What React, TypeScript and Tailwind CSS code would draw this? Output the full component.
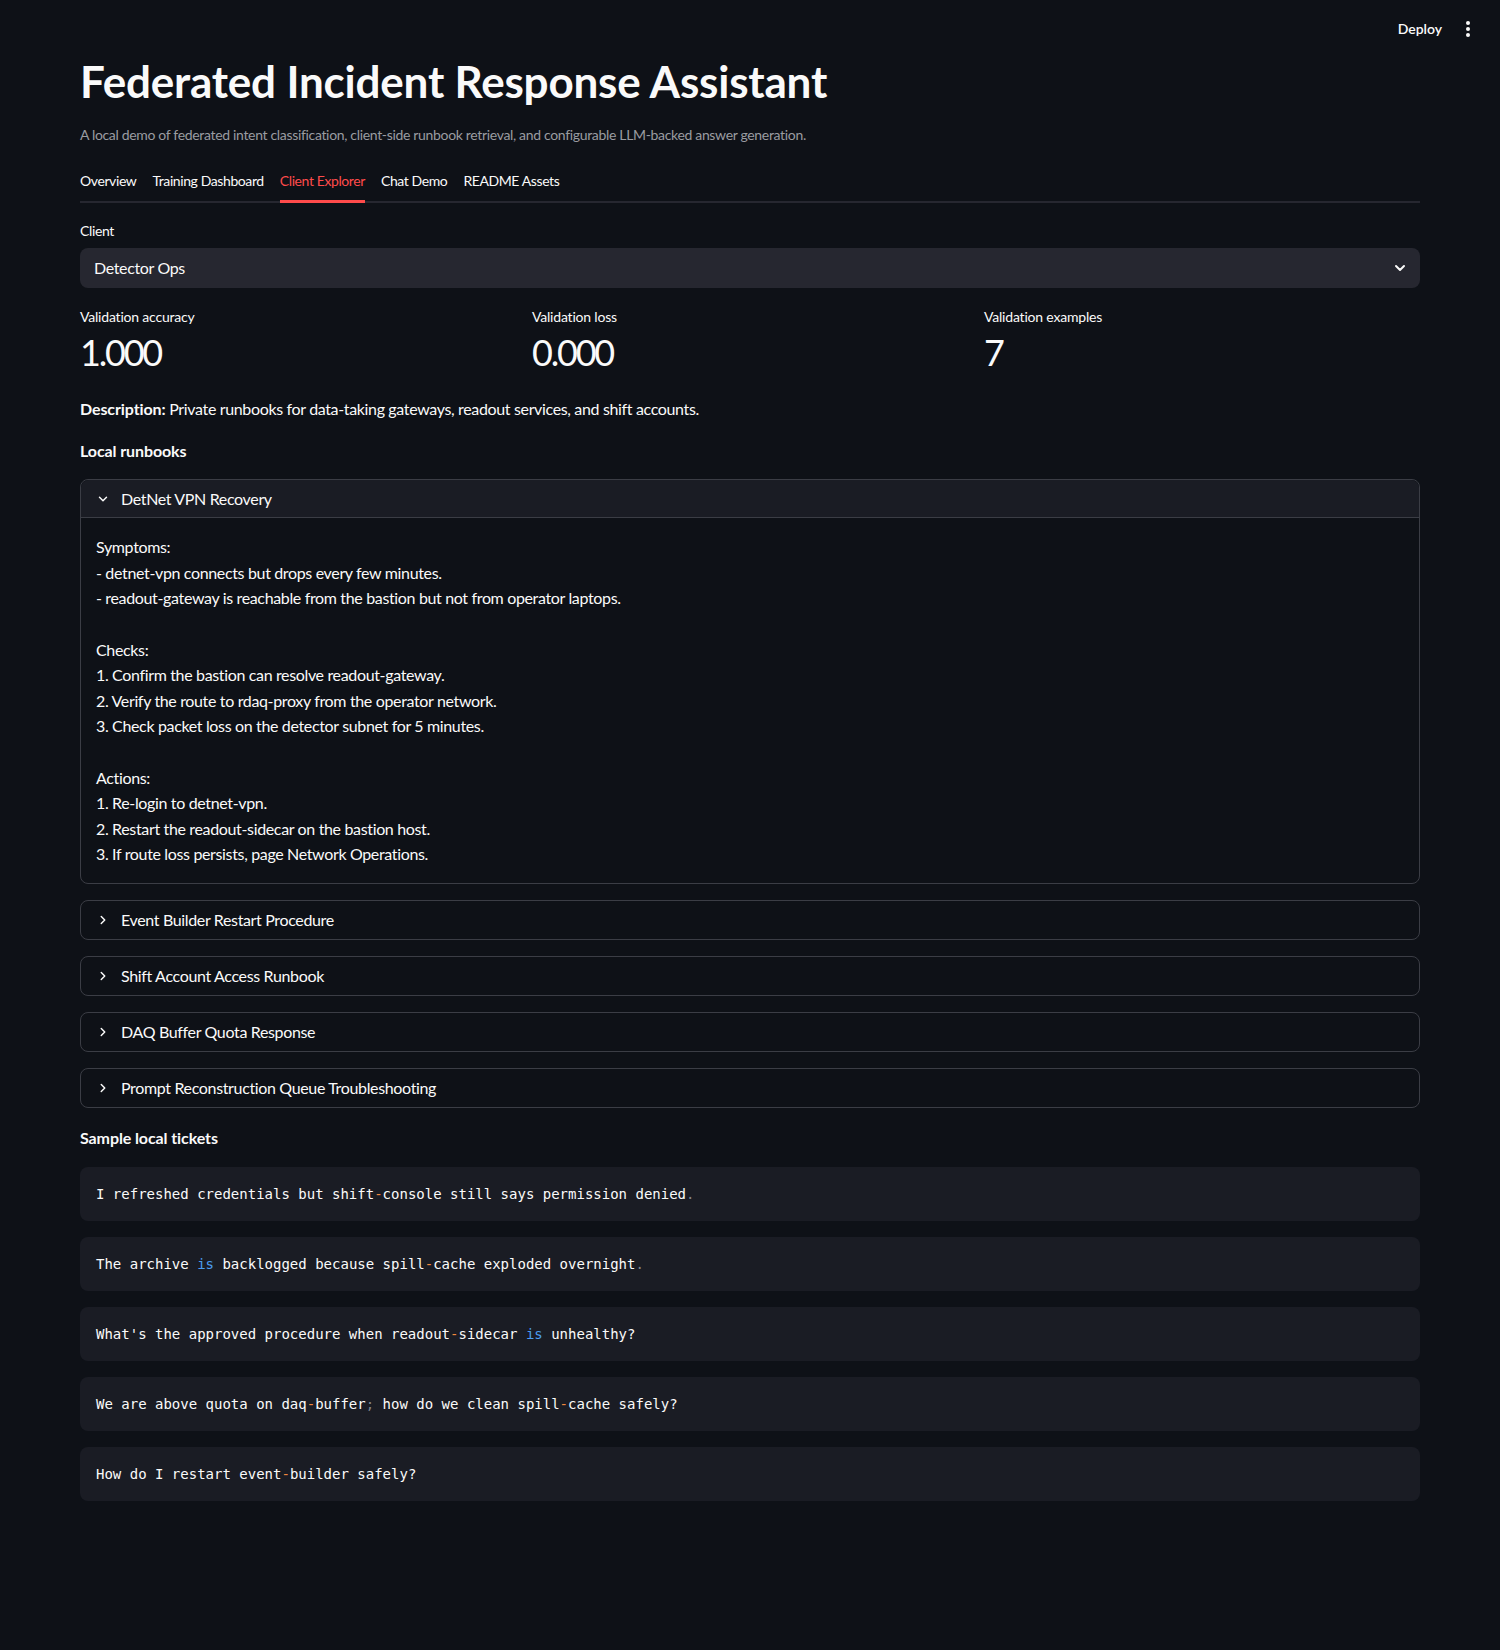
import { ChevronDown, ChevronRight } from "lucide-react";

const SANS = "font-['Lato','Noto_Sans',sans-serif]";

const runbooks = [
  "DetNet VPN Recovery",
  "Event Builder Restart Procedure",
  "Shift Account Access Runbook",
  "DAQ Buffer Quota Response",
  "Prompt Reconstruction Queue Troubleshooting",
];

const detnetBody = `Symptoms:
- detnet-vpn connects but drops every few minutes.
- readout-gateway is reachable from the bastion but not from operator laptops.

Checks:
1. Confirm the bastion can resolve readout-gateway.
2. Verify the route to rdaq-proxy from the operator network.
3. Check packet loss on the detector subnet for 5 minutes.

Actions:
1. Re-login to detnet-vpn.
2. Restart the readout-sidecar on the bastion host.
3. If route loss persists, page Network Operations.`;

const tickets = [
  "I refreshed credentials but shift-console still says permission denied.",
  "The archive is backlogged because spill-cache exploded overnight.",
  "What's the approved procedure when readout-sidecar is unhealthy?",
  "We are above quota on daq-buffer; how do we clean spill-cache safely?",
  "How do I restart event-builder safely?",
];

const tabs = ["Overview", "Training Dashboard", "Client Explorer", "Chat Demo", "README Assets"];

// crude highlighter, like the code block in the screenshot
function Highlighted({ text }: { text: string }) {
  const parts = text.split(/(\bis\b|-|[.;])/);
  return (
    <>
      {parts.map((p, i) => {
        if (p === "-") return <span key={i} className="text-[#f0883e]">{p}</span>;
        if (p === "is") return <span key={i} className="text-[#4b9cf0]">{p}</span>;
        if (p === "." || p === ";") return <span key={i} className="text-[#80848c]">{p}</span>;
        return <span key={i}>{p}</span>;
      })}
    </>
  );
}

function Metric({ label, value }: { label: string; value: string }) {
  return (
    <div className="flex flex-col">
      <div className="text-[14px] leading-[21px] tracking-[-0.2px]">{label}</div>
      <div className="mt-[4px] text-[36px] leading-[43px] tracking-[-2.2px]">{value}</div>
    </div>
  );
}

function Expander({ title, open, children }: { title: string; open?: boolean; children?: React.ReactNode }) {
  return (
    <div className="rounded-lg border border-[#3b3d45]">
      <div
        className={`flex h-[38px] items-center gap-[11px] px-[15px] text-[16px] ${
          open ? "rounded-t-lg border-b border-[#3b3d45] bg-[#1a1c24]" : ""
        }`}
      >
        {open ? <ChevronDown size={14} strokeWidth={2.5} /> : <ChevronRight size={14} strokeWidth={2.5} />}
        <span>{title}</span>
      </div>
      {open ? <div className="whitespace-pre-line px-[15px] py-[16px] text-[16px] leading-[25.6px]">{children}</div> : null}
    </div>
  );
}

export default function App() {
  return (
    <div className={`min-h-[1650px] bg-[#0e1117] text-[#fafafa] tracking-[-0.35px] ${SANS}`}>
      {/* top bar */}
      <div className="flex h-[55px] items-start justify-end pr-[22px] pt-[18px]">
        <span className="text-[14px] font-semibold leading-[22px] tracking-normal">Deploy</span>
        <svg width="20" height="22" viewBox="0 0 20 22" className="ml-[16px]" fill="#fafafa">
          <circle cx="10" cy="5" r="2" />
          <circle cx="10" cy="11" r="2" />
          <circle cx="10" cy="17" r="2" />
        </svg>
      </div>

      <div className="px-[80px]">
        <h1 className="text-[44px] font-bold leading-[53px] tracking-[-0.2px]">Federated Incident Response Assistant</h1>
        <p className="mt-[16px] text-[14px] leading-[21px] tracking-[-0.33px] text-[#9a9ca1]">
          A local demo of federated intent classification, client-side runbook retrieval, and configurable LLM-backed answer generation.
        </p>

        {/* tabs */}
        <div className="mt-[16px] flex gap-[16px] shadow-[inset_0_-2px_0_#262730]">
          {tabs.map((t) => (
            <div
              key={t}
              className={`flex h-[42px] items-center border-b-[3px] text-[14px] tracking-[-0.4px] ${
                t === "Client Explorer" ? "border-[#ff4b4b] text-[#ff4b4b]" : "border-transparent"
              }`}
            >
              {t}
            </div>
          ))}
        </div>

        <div className="mt-[17px] text-[14px] leading-[21px]">Client</div>
        <div className="mt-[7px] flex h-[40px] items-center justify-between rounded-lg bg-[#262730] pl-[14px] pr-[12px] text-[16px]">
          <span>Detector Ops</span>
          <ChevronDown size={16} strokeWidth={3} />
        </div>

        <div className="mt-[18px] grid grid-cols-3 gap-[16px]">
          <Metric label="Validation accuracy" value="1.000" />
          <Metric label="Validation loss" value="0.000" />
          <Metric label="Validation examples" value="7" />
        </div>

        <p className="mt-[22px] text-[16px] leading-[25.6px]">
          <strong className="font-bold tracking-[-0.1px]">Description:</strong> Private runbooks for data-taking gateways, readout services, and shift accounts.
        </p>

        <p className="mt-[16px] text-[16px] font-bold leading-[25.6px] tracking-[-0.1px]">Local runbooks</p>

        <div className="mt-[16px] flex flex-col gap-[16px]">
          <Expander title={runbooks[0]} open>
            {detnetBody}
          </Expander>
          {runbooks.slice(1).map((r) => (
            <Expander key={r} title={r} />
          ))}
        </div>

        <p className="mt-[17px] text-[16px] font-bold leading-[25.6px] tracking-[-0.1px]">Sample local tickets</p>

        <div className="mt-[16px] flex flex-col gap-[16px]">
          {tickets.map((t) => (
            <pre
              key={t}
              className="rounded-lg bg-[#1a1c24] px-[16px] py-[16px] font-['DejaVu_Sans_Mono','Liberation_Mono',monospace] text-[14px] leading-[22px] tracking-normal"
            >
              <Highlighted text={t} />
            </pre>
          ))}
        </div>
      </div>
    </div>
  );
}
